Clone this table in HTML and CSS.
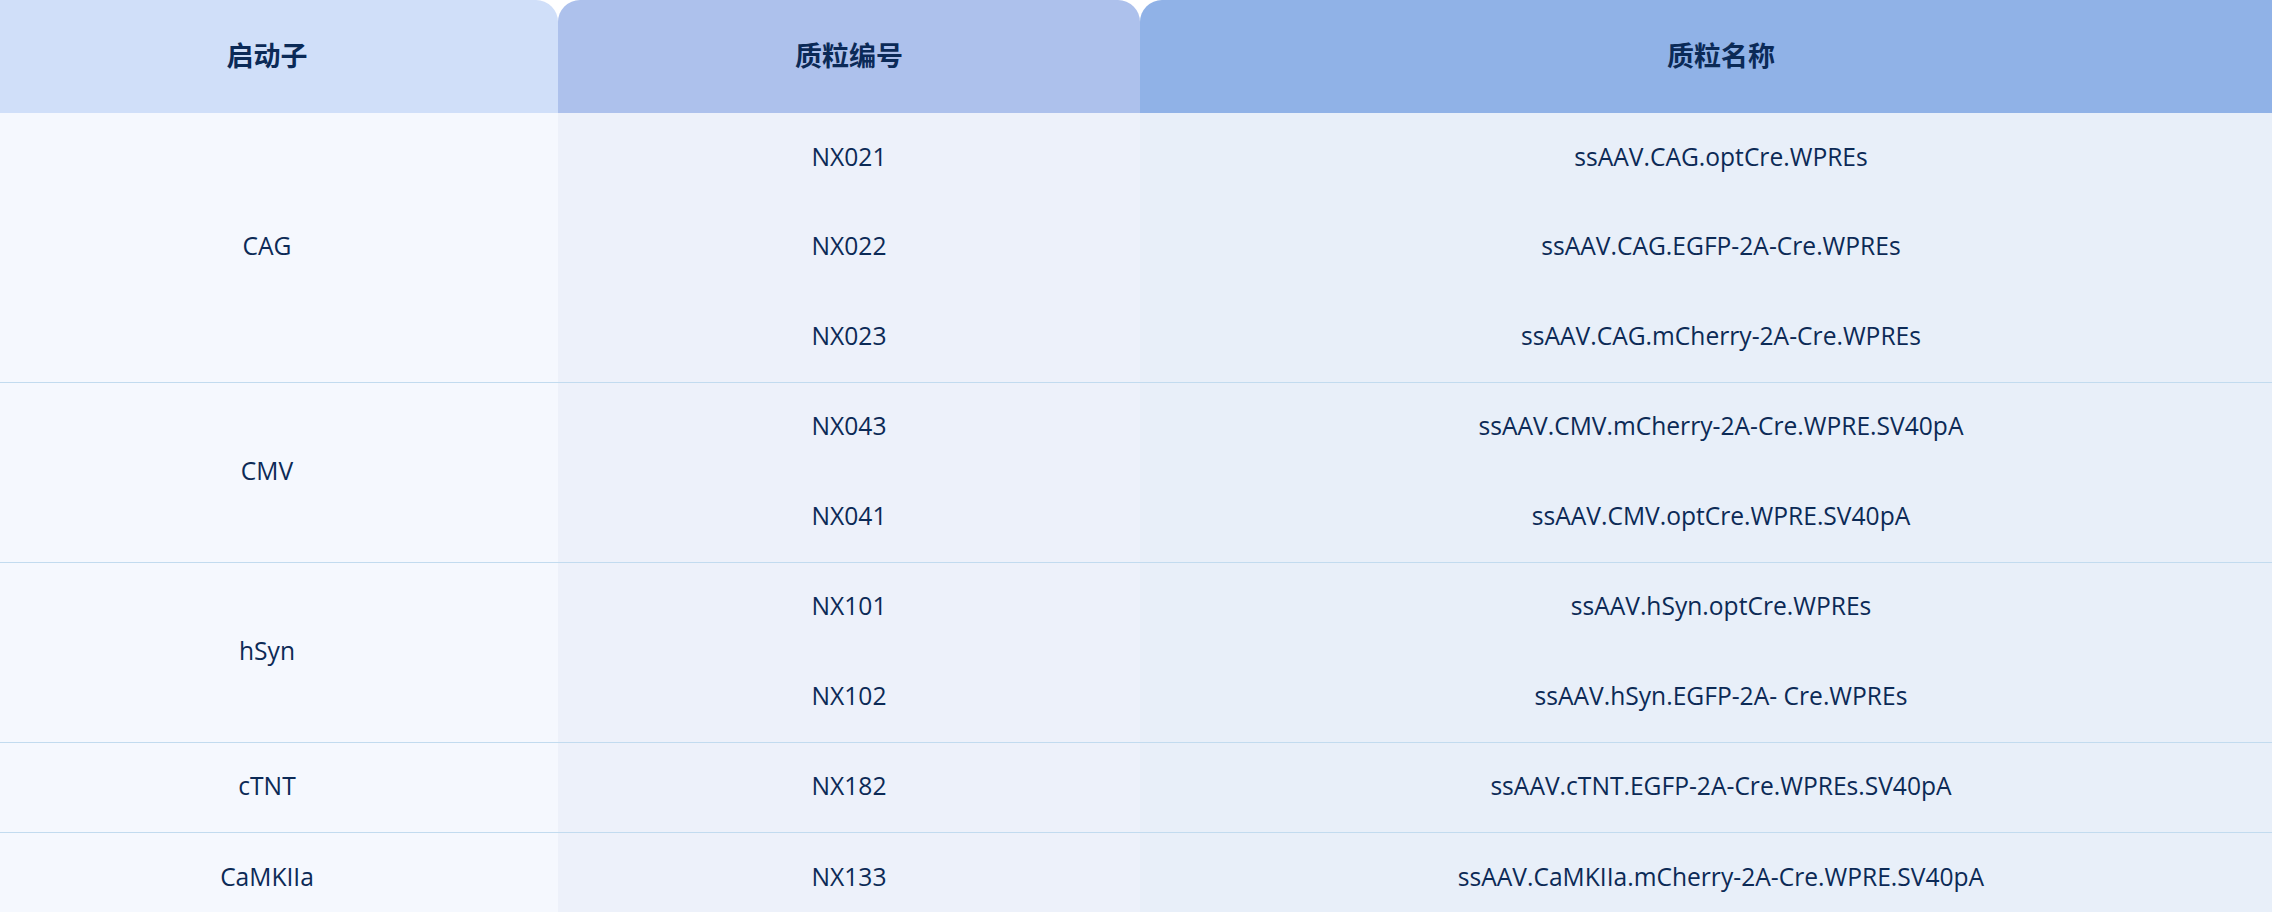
FILE: index.html
```html
<!DOCTYPE html>
<html lang="zh-CN">
<head>
<meta charset="utf-8">
<title>启动子 质粒</title>
<link rel="stylesheet" href="styles.css">
</head>
<body>
<div class="table">
  <div class="head">
    <div class="hcell h1">启动子</div>
    <div class="hcell h2">质粒编号</div>
    <div class="hcell h3">质粒名称</div>
  </div>

  <div class="group">
    <div class="cell c1 span3">CAG</div>
    <div class="cell c2">NX021</div><div class="cell c3">ssAAV.CAG.optCre.WPREs</div>
    <div class="cell c2">NX022</div><div class="cell c3">ssAAV.CAG.EGFP-2A-Cre.WPREs</div>
    <div class="cell c2">NX023</div><div class="cell c3">ssAAV.CAG.mCherry-2A-Cre.WPREs</div>
  </div>

  <div class="group">
    <div class="cell c1 span2">CMV</div>
    <div class="cell c2">NX043</div><div class="cell c3">ssAAV.CMV.mCherry-2A-Cre.WPRE.SV40pA</div>
    <div class="cell c2">NX041</div><div class="cell c3">ssAAV.CMV.optCre.WPRE.SV40pA</div>
  </div>

  <div class="group">
    <div class="cell c1 span2">hSyn</div>
    <div class="cell c2">NX101</div><div class="cell c3">ssAAV.hSyn.optCre.WPREs</div>
    <div class="cell c2">NX102</div><div class="cell c3">ssAAV.hSyn.EGFP-2A- Cre.WPREs</div>
  </div>

  <div class="group">
    <div class="cell c1">cTNT</div>
    <div class="cell c2">NX182</div><div class="cell c3">ssAAV.cTNT.EGFP-2A-Cre.WPREs.SV40pA</div>
  </div>

  <div class="group">
    <div class="cell c1">CaMKIIa</div>
    <div class="cell c2">NX133</div><div class="cell c3">ssAAV.CaMKIIa.mCherry-2A-Cre.WPRE.SV40pA</div>
  </div>
</div>
</body>
</html>
```

FILE: styles.css
```css
html {
  overflow: hidden;
}

html, body {
  margin: 0;
  padding: 0;
  background: #ffffff;
}

body {
  font-family: "Open Sans", "Noto Sans", "Noto Sans CJK SC", sans-serif;
  color: #0c2a56;
}

.table {
  width: 2326px;
  margin-left: -24px;
}

.head {
  display: grid;
  grid-template-columns: 582px 582px 1fr;
  height: 113px;
}

.hcell {
  display: flex;
  align-items: center;
  justify-content: center;
  padding-bottom: 5px;
  font-family: "Noto Sans CJK SC", sans-serif;
  font-weight: 700;
  font-size: 27px;
  color: #0b2a57;
}

.h1 {
  background: #d0dff9;
  border-top-left-radius: 22px;
  border-top-right-radius: 22px;
}

.h2 {
  background: #adc1ec;
  border-top-left-radius: 22px;
  border-top-right-radius: 22px;
}

.h3 {
  background: #90b2e7;
  border-top-left-radius: 22px;
  border-top-right-radius: 22px;
}

.group {
  display: grid;
  grid-template-columns: 582px 582px 1fr;
  grid-auto-rows: 89.5px;
  border-top: 1px solid #c2dbef;
}

.head + .group {
  border-top: none;
}

.cell {
  display: flex;
  align-items: center;
  justify-content: center;
  padding-bottom: 3px;
  font-size: 24.6px;
}

.c1 {
  grid-column: 1;
  background: #f5f8fe;
}

.span2 {
  grid-row: span 2;
}

.span3 {
  grid-row: span 3;
}

.c2 {
  grid-column: 2;
  background: #edf1fa;
}

.c3 {
  grid-column: 3;
  background: #e8eff9;
}
```
